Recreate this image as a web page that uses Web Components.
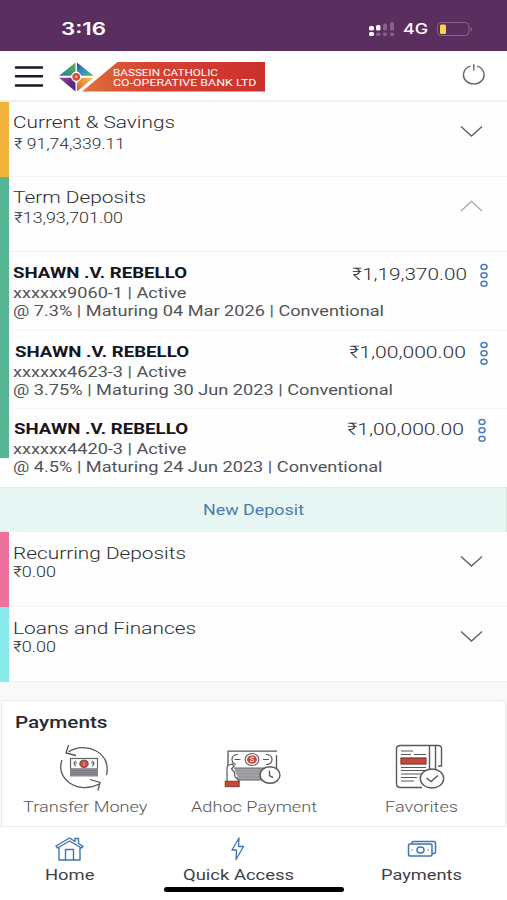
<!DOCTYPE html>
<html lang="en">
<head>
<meta charset="utf-8">
<meta name="viewport" content="width=device-width">
<title>Accounts</title>
<style>
html, body {
  margin: 0;
  background: #fff;
}
body {
  width: 507px;
  height: 900px;
  overflow: hidden;
  font-family: Roboto, "Liberation Sans", sans-serif;
  color: #4b4d52;
}
</style>
</head>
<body>
<bank-app></bank-app>

<script>
// text stretched to an exact width, in px
customElements.define('wide-text',
  class extends HTMLElement {
    connectedCallback() {
      if (this.shadowRoot) return
      this.attachShadow({ mode: 'open' })
      this.shadowRoot.innerHTML = `
<style>
:host {
  display: block;
  flex: none;
  white-space: nowrap;
}
span {
  display: inline-block;
  vertical-align: top;
  transform-origin: 0 0;
}
</style>
<span><slot></slot></span>`
      const w = Number(this.getAttribute('w'))
      const span = this.shadowRoot.querySelector('span')
      this.style.width = w + 'px'
      span.style.transform = `scaleX(${w / span.getBoundingClientRect().width})`
    }
  }
)

customElements.define('status-bar',
  class extends HTMLElement {
    connectedCallback() {
      this.attachShadow({ mode: 'open' })
      this.shadowRoot.innerHTML = `
<style>
:host {
  display: flex;
  align-items: center;
  box-sizing: border-box;
  height: 51px;
  padding: 7px 34px 0 61px;
  background: #5a2f60;
  color: #fff;
  font-family: Inter, "Liberation Sans", sans-serif;
}
.time { font-size: 17.3px; line-height: 20px; font-weight: 600; margin-right: auto; }
.net { font-size: 14.8px; line-height: 20px; font-weight: 500; margin: 0 8px 0 8px; }
</style>
<wide-text class="time" w="45">3:16</wide-text>
<svg width="27" height="16" viewBox="0 0 27 16">
  <g fill="#fff">
    <rect x="1" y="5" width="5" height="4.500" rx="1.500"/><rect x="1" y="11" width="5" height="4" rx="1.500"/>
    <rect x="8" y="4" width="4.500" height="5.500" rx="1.500"/>
  </g>
  <g fill="#84628a">
    <rect x="8" y="11.500" width="4.500" height="3.500" rx="1.500"/>
    <rect x="15" y="2.500" width="4" height="7" rx="1.500"/><rect x="15" y="11.500" width="4" height="3.500" rx="1.500"/>
    <rect x="22" y="1" width="4" height="8.500" rx="1.500"/><rect x="22" y="11.500" width="4" height="3.500" rx="1.500"/>
  </g>
</svg>
<wide-text class="net" w="25">4G</wide-text>
<svg width="37" height="16" viewBox="0 0 37 16">
  <rect x="1.500" y="1.500" width="31.500" height="13" rx="4" fill="none" stroke="#866589"/>
  <rect x="4" y="3.500" width="6" height="9.500" rx="1.500" fill="#fbd34d"/>
  <path d="M34.500 6v4.500q1.500-.6 1.500-2.200t-1.500-2.300z" fill="#866589"/>
</svg>`
    }
  }
)

customElements.define('bank-logo',
  class extends HTMLElement {
    connectedCallback() {
      this.attachShadow({ mode: 'open' })
      this.shadowRoot.innerHTML = `
<style>
:host { display: block; }
svg { display: block; }
text {
  font: 400 9.9px Roboto, "Liberation Sans", sans-serif;
  fill: #fff;
}
</style>
<svg width="208" height="32" viewBox="0 0 208 32">
  <defs>
    <linearGradient id="red"><stop offset="0" stop-color="#e0703a"/><stop offset=".35" stop-color="#d64332"/><stop offset="1" stop-color="#cb302d"/></linearGradient>
    <linearGradient id="tl" x1="0" y1="1" x2="1" y2="0"><stop offset="0" stop-color="#2870b8"/><stop offset=".5" stop-color="#3a9c74"/><stop offset="1" stop-color="#6fb23c"/></linearGradient>
    <linearGradient id="tr" x1="0" y1="0" x2="1" y2="1"><stop offset="0" stop-color="#2a50ac"/><stop offset=".5" stop-color="#348fc8"/><stop offset="1" stop-color="#62b552"/></linearGradient>
    <linearGradient id="bl" x1="0" y1="0" x2="1" y2="1"><stop offset="0" stop-color="#a74b9c"/><stop offset=".5" stop-color="#662882"/><stop offset="1" stop-color="#4d277e"/></linearGradient>
    <linearGradient id="br" x1="1" y1="0" x2="0" y2="1"><stop offset="0" stop-color="#f0c84e"/><stop offset="1" stop-color="#e35b2e"/></linearGradient>
  </defs>
  <path d="M59.500 1H207V30.500H24z" fill="url(#red)"/>
  <path d="M1 14.800 17.500 1.500v8.500l-4.500 4.800z" fill="url(#tl)"/>
  <path d="M19 1.500 35.500 14.800h-12l-4.500-4.800z" fill="url(#tr)"/>
  <path d="M1 16.800 17.500 30.500v-8.500l-4.500-5.200z" fill="url(#bl)"/>
  <path d="M19 30.500 35.500 16.800h-12l-4.500 5.200z" fill="url(#br)"/>
  <circle cx="18.200" cy="15.800" r="4.500" fill="#d94e36" stroke="#fff" stroke-width="1.200"/>
  <circle cx="18.200" cy="15.800" r="1.400" fill="#f6a890"/>
  <text x="55" y="14.700" textLength="105" lengthAdjust="spacingAndGlyphs">BASSEIN CATHOLIC</text>
  <text x="55" y="25" textLength="143.500" lengthAdjust="spacingAndGlyphs">CO-OPERATIVE BANK LTD</text>
</svg>`
    }
  }
)

customElements.define('app-header',
  class extends HTMLElement {
    connectedCallback() {
      this.attachShadow({ mode: 'open' })
      this.shadowRoot.innerHTML = `
<style>
:host {
  display: flex;
  box-sizing: border-box;
  height: 51px;
  padding: 10px 21px 0 14px;
  border-bottom: 2px solid #f0f0f1;
  background: #fff;
}
bank-logo { margin: 0 auto 0 14px; }
.menu { margin-top: 3px; }
.power { margin-top: 1.5px; }
</style>
<svg class="menu" width="30" height="26" viewBox="0 0 30 26">
  <path d="M2 3.500H28M2 12.300H28M2 21.400H28" stroke="#171a26" stroke-width="2.500" stroke-linecap="round"/>
</svg>
<bank-logo></bank-logo>
<svg class="power" width="25" height="24" viewBox="0 0 25 24">
  <path d="M9.400 3.200A10.300 9.100 0 1 0 16.200 3.200M12.800 1.200V7.500" fill="none" stroke="#5d6064" stroke-width="1.400"/>
</svg>`
    }
  }
)

customElements.define('account-section',
  class extends HTMLElement {
    connectedCallback() {
      const get = name => this.getAttribute(name)
      const open = this.hasAttribute('open')
      this.attachShadow({ mode: 'open' })
      this.shadowRoot.innerHTML = `
<style>
:host {
  display: grid;
  grid-template-columns: 9px 1fr;
  background: #fefefe;
}
.strip {
  background: var(--strip);
  margin-bottom: var(--strip-gap, 0);
}
.head {
  display: flex;
  justify-content: space-between;
  box-sizing: border-box;
  height: var(--head, 75px);
  padding: 10px 24px 0 4px;
  border-bottom: 1.5px solid #f3f3f4;
}
.title { font-size: 17.3px; line-height: 20px; font-weight: 300; color: #2b2d32; margin-top: var(--title-top, 0); }
.sum { font-size: 15.2px; line-height: 18px; font-weight: 300; color: #2b2d32; margin: var(--sum-top, 2px) 0 0 var(--sum-left, 1px); }
svg { margin-top: 12px; }
</style>
<div class="strip"></div>
<div>
  <div class="head">
    <div>
      <wide-text class="title" w="${get('title-w')}">${get('name')}</wide-text>
      <wide-text class="sum" w="${get('sum-w')}">${get('sum')}</wide-text>
    </div>
    <svg width="23" height="14" viewBox="0 0 23 14">
      <path d="${open ? 'M1 12 11.500 2.300 22 12' : 'M1 2.500 11.500 12 22 2.500'}" fill="none" stroke="${open ? '#a4a5a8' : '#5b5d61'}" stroke-width="1.300"/>
    </svg>
  </div>
  <slot></slot>
</div>`
    }
  }
)

customElements.define('deposit-row',
  class extends HTMLElement {
    connectedCallback() {
      const get = name => this.getAttribute(name)
      this.attachShadow({ mode: 'open' })
      this.shadowRoot.innerHTML = `
<style>
:host {
  display: grid;
  grid-template-columns: 1fr auto auto;
  grid-template-rows: 21px 18px 20px;
  box-sizing: border-box;
  height: 78.5px;
  margin-left: 4px;
  padding: var(--top, 10.5px) var(--right, 18px) 0 0;
  border-bottom: 1.5px solid #f5f5f6;
}
:host(:last-child) { height: 78px; border: 0; }
.name {
  font-size: 14.8px;
  line-height: 20px;
  font-weight: 700;
  color: #15151c;
  margin-left: var(--indent, 0);
}
.line { grid-column: 1 / -1; font-size: 14.5px; line-height: 19px; color: #515357; }
.amount {
  font-size: 17.3px;
  line-height: 20px;
  font-weight: 300;
  color: #2b2d32;
  margin: var(--amount-top, 1.5px) var(--amount-right, 12px) 0 0;
}
svg { margin-top: calc(var(--amount-top, 1.5px) - 2px); }
</style>
<wide-text class="name" w="174">SHAWN .V. REBELLO</wide-text>
<wide-text class="amount" w="${get('amount-w')}">${get('amount')}</wide-text>
<svg width="10" height="27" viewBox="0 0 10 27">
  <g fill="none" stroke="#4a7fb7" stroke-width="1.500">
    <ellipse cx="5" cy="5" rx="3" ry="2.500"/><ellipse cx="5" cy="13.300" rx="3" ry="2.500"/><ellipse cx="5" cy="21.700" rx="3" ry="2.500"/>
  </g>
</svg>
<wide-text class="line" w="173.500">${get('number')} | Active</wide-text>
<wide-text class="line" w="${get('terms-w')}">${get('terms')}</wide-text>`
    }
  }
)

customElements.define('new-deposit',
  class extends HTMLElement {
    connectedCallback() {
      this.attachShadow({ mode: 'open' })
      this.shadowRoot.innerHTML = `
<style>
:host {
  display: flex;
  justify-content: center;
  box-sizing: border-box;
  height: 45px;
  padding-top: 12.5px;
  border-top: 1.5px solid #dfebe8;
  border-right: 1px solid #d5e3df;
  background: #e8f6f3;
  color: #4a7cae;
  font-size: 15px;
  line-height: 19px;
}
</style>
<wide-text w="101"><slot></slot></wide-text>`
    }
  }
)

// icon over a caption, used by the payments card and the tab bar
customElements.define('icon-item',
  class extends HTMLElement {
    connectedCallback() {
      this.attachShadow({ mode: 'open' })
      this.shadowRoot.innerHTML = `
<style>
:host {
  display: flex;
  flex-direction: column;
  align-items: center;
}
.icon { height: var(--icon-height); margin-right: var(--icon-shift, 0); }
wide-text { font-size: 15.3px; line-height: 20px; }
</style>
<div class="icon"><slot name="icon"></slot></div>
<wide-text w="${this.getAttribute('w')}"><slot></slot></wide-text>`
    }
  }
)

customElements.define('payments-card',
  class extends HTMLElement {
    connectedCallback() {
      this.attachShadow({ mode: 'open' })
      this.shadowRoot.innerHTML = `
<style>
:host {
  display: block;
  box-sizing: border-box;
  height: 126px;
  margin: 18.5px 1px 0;
  padding: 10.5px 0 0 0;
  border: 1px solid #ececed;
  border-bottom: 0;
  border-radius: 3px 3px 0 0;
  background: #fff;
}
.title { margin-left: 12.5px; font-size: 17px; line-height: 21px; font-weight: 500; color: #2a2b30; }
.items {
  display: grid;
  grid-template-columns: 168px 168px 168px;
  margin: 11px 0 0 -.5px;
  font-weight: 300;
  color: #55575b;
  --icon-height: 53px;
  --icon-shift: 4px;
}
icon-item:last-child { --icon-shift: 1px; }
</style>
<wide-text class="title" w="92.500">Payments</wide-text>
<div class="items">
  <icon-item w="124.500">
    <svg slot="icon" width="56" height="50" viewBox="0 0 56 50">
      <g fill="none" stroke="#55575b" stroke-width="1.300">
        <path d="M12.500 8C29-3 56 8 50.500 31M6 16C-1 35 22 51 43.500 40M12.500 1 10 9 20 11.500M34 35.500 44 38.500 42 46.500"/>
      </g>
      <rect x="14.500" y="14.500" width="27" height="10.500" fill="#fff" stroke="#626469" stroke-width="1.200"/>
      <path d="M20 17q-4 2 0 5M36 17q4 2 0 5M18 19h3M35 19h3" fill="none" stroke="#626469" stroke-width="1.200"/>
      <ellipse cx="28" cy="19.800" rx="4.200" ry="3.700" fill="#c84a39" stroke="#77504d"/>
      <path d="M28 17.800v4" stroke="#f1b6aa"/>
      <rect x="14" y="24.500" width="28" height="8" fill="#8b8c90"/>
      <path d="M14 26.500H42M14 28.500H42M14 30.500H42" stroke="#77797d" stroke-width=".8"/>
    </svg>
    Transfer Money
  </icon-item>
  <icon-item w="126">
    <svg slot="icon" width="60" height="50" viewBox="0 0 60 50">
      <path d="M6 22V7.200H55M54.500 11V24" fill="none" stroke="#55575b" stroke-width="1.300"/>
      <ellipse cx="30" cy="15.500" rx="6.800" ry="6" fill="#fff" stroke="#626469" stroke-width="1.200"/>
      <ellipse cx="30" cy="15.500" rx="4.900" ry="4.300" fill="#c84937"/>
      <path d="M32 13.500q-3.500-1.200-3.500.6 0 1 1.700 1.300t1.600 1.300q-.2 1.500-3.800.4" fill="none" stroke="#fff" stroke-width="1"/>
      <path d="M16 10.500q-6 0-6 5 0 4 4 5M44 10.500q6 0 6 5 0 5-6 5M12.500 15.500h6M41 15.500h6" fill="none" stroke="#55575b" stroke-width="1.200"/>
      <path d="M12 24H50V36H13L15.500 33z" fill="#a4a5a9"/>
      <path d="M12 24H48M13 36H45" stroke="#626469" stroke-width="1.200"/>
      <path d="M14 27H44M15 30H42M15 33H44" stroke="#8c8e92" stroke-width=".8"/>
      <path d="M5 37.500V24q0-3 5-4l2 2-2.500 3 3 3 .5 5q3 2 4 4.500" fill="#fff" stroke="#55575b" stroke-width="1.200"/>
      <rect x="3.200" y="37.200" width="14" height="5.500" fill="#c74835" stroke="#77312b" stroke-width=".9"/>
      <ellipse cx="48" cy="31" rx="10" ry="8.300" fill="#fff" stroke="#55575b" stroke-width="1.400"/>
      <path d="M47.500 26.500v5l3.500 2.200" fill="none" stroke="#55575b" stroke-width="1.400"/>
    </svg>
    Adhoc Payment
  </icon-item>
  <icon-item w="73">
    <svg slot="icon" width="56" height="50" viewBox="0 0 56 50">
      <g fill="none" stroke="#56585c" stroke-width="1.400">
        <path d="M29 43.500H7.500Q3.500 43.500 3.500 39.500V5Q3.500 1.500 7.500 1.500H45Q48.500 1.500 48.500 4.500V22H45M36.500 1.500V25M42.500 1.500V25"/>
        <path d="M8 7H20M8 10.500H18M21 10.500H33M8 23.500H33M8 26.500H33M8 30H28M8 33.500H24M8 37H21" stroke-width="1.200"/>
      </g>
      <rect x="8" y="14" width="25" height="6" fill="#c74835" stroke="#703a37" stroke-width="1.200"/>
      <ellipse cx="39" cy="34.500" rx="11.700" ry="9.500" fill="#fff" stroke="#56585c" stroke-width="1.400"/>
      <path d="M33.500 34 38 37.500 45 31.500" fill="none" stroke="#56585c" stroke-width="1.400"/>
    </svg>
    Favorites
  </icon-item>
</div>`
    }
  }
)

customElements.define('tab-bar',
  class extends HTMLElement {
    connectedCallback() {
      this.attachShadow({ mode: 'open' })
      this.shadowRoot.innerHTML = `
<style>
:host {
  display: block;
  box-sizing: border-box;
  height: 74px;
  border-top: 1.5px solid #ededee;
  background: #fff;
}
.tabs {
  display: grid;
  grid-template-columns: 140px 196px 171px;
  padding-top: 8.5px;
  color: #3f4146;
  --icon-height: 29px;
}
.handle {
  width: 180px;
  height: 5px;
  margin: 2px 0 0 164px;
  border-radius: 3px;
  background: #000;
}
</style>
<div class="tabs">
  <icon-item w="49.500">
    <svg slot="icon" width="30" height="25" viewBox="0 0 30 25">
      <path d="M4 11.500V24H10.500V13.500H18.500V24H25V11.500M1 10 14.500 2 20 5.500V2.500H23.500V7.500L28 10.300 26.500 12 14.500 5 2.500 12zM10.500 24H18.500" fill="none" stroke="#3d74b0" stroke-width="1.400" stroke-linejoin="round"/>
    </svg>
    Home
  </icon-item>
  <icon-item w="111">
    <svg slot="icon" width="16" height="25" viewBox="0 0 16 25">
      <path d="M9 2 2 14H6.500L6 23.500 13.500 10.500H8.500z" fill="none" stroke="#3d74b0" stroke-width="1.300" stroke-linejoin="round"/>
    </svg>
    Quick Access
  </icon-item>
  <icon-item w="81">
    <svg slot="icon" width="30" height="25" viewBox="0 0 30 25">
      <g fill="none" stroke="#3d74b0" stroke-width="1.500" stroke-linejoin="round">
        <rect x="1.500" y="8" width="23.500" height="12" rx="1.500"/>
        <path d="M5 8V6.500Q5 5.500 6.500 5.500H27Q28.500 5.500 28.500 7V16Q28.500 17.500 27 17.500H25"/>
        <ellipse cx="13.500" cy="14" rx="3.500" ry="3"/>
      </g>
      <path d="M4.500 14h1.500M20.500 14h1.500" stroke="#3d74b0"/>
    </svg>
    Payments
  </icon-item>
</div>
<div class="handle"></div>`
    }
  }
)

customElements.define('bank-app',
  class extends HTMLElement {
    connectedCallback() {
      this.attachShadow({ mode: 'open' })
      this.shadowRoot.innerHTML = `
<style>
:host {
  display: block;
  height: 900px;
  background: #f9f9fa;
}
.savings { --strip: #f3b33c; --sum-top: 3px; }
.term { --strip: #56b593; --strip-gap: 29.5px; }
.recurring, .loans { --title-top: 1px; --sum-top: 0px; --sum-left: 0; }
.recurring { --strip: #ed709d; }
.loans { --strip: #86ebea; --head: 74.5px; }
.second { --indent: 2px; --top: 11px; --amount-top: .5px; --amount-right: 13.5px; }
.third { --indent: .5px; --right: 20px; --top: 10px; --amount-top: 0px; --amount-right: 13.5px; }
</style>
<status-bar></status-bar>
<app-header></app-header>
<account-section class="savings" name="Current &amp; Savings" title-w="162" sum="₹ 91,74,339.11" sum-w="111"></account-section>
<account-section class="term" open name="Term Deposits" title-w="133" sum="₹13,93,701.00" sum-w="109">
  <deposit-row number="xxxxxx9060-1" amount="₹1,19,370.00" amount-w="115" terms="@ 7.3% | Maturing 04 Mar 2026 | Conventional" terms-w="371"></deposit-row>
  <deposit-row class="second" number="xxxxxx4623-3" amount="₹1,00,000.00" amount-w="117" terms="@ 3.75% | Maturing 30 Jun 2023 | Conventional" terms-w="380"></deposit-row>
  <deposit-row class="third" number="xxxxxx4420-3" amount="₹1,00,000.00" amount-w="117" terms="@ 4.5% | Maturing 24 Jun 2023 | Conventional" terms-w="369.500"></deposit-row>
</account-section>
<new-deposit>New Deposit</new-deposit>
<account-section class="recurring" name="Recurring Deposits" title-w="173" sum="₹0.00" sum-w="43"></account-section>
<account-section class="loans" name="Loans and Finances" title-w="183" sum="₹0.00" sum-w="43"></account-section>
<payments-card></payments-card>
<tab-bar></tab-bar>`
    }
  }
)
</script>
</body>
</html>
